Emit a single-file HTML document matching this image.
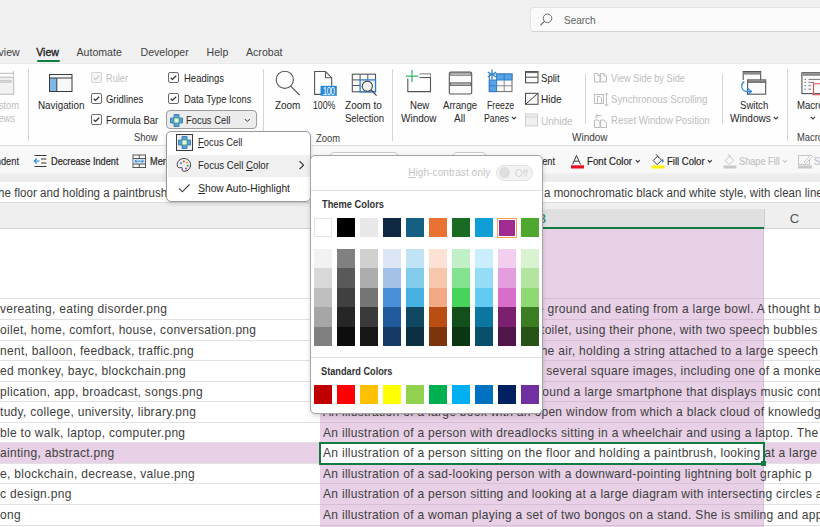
<!DOCTYPE html><html><head><meta charset="utf-8"><style>
html,body{margin:0;padding:0;width:820px;height:527px;overflow:hidden;background:#fff;position:relative}
body{font-family:"Liberation Sans",sans-serif}
.t{position:absolute;white-space:nowrap}
.r{position:absolute}
u{text-decoration-thickness:1px;text-underline-offset:1px}
</style></head><body>
<div class="r" style="left:0px;top:0px;width:820px;height:63px;background:#f0f0f0"></div>
<div class="r" style="left:0px;top:63px;width:820px;height:82px;background:#fefefe"></div>
<div class="r" style="left:0px;top:63px;width:820px;height:1px;background:#e9e9e9"></div>
<div class="r" style="left:0px;top:145px;width:820px;height:1px;background:#dedede"></div>
<div class="r" style="left:0px;top:146px;width:820px;height:1px;background:#ececec"></div>
<div class="r" style="left:0px;top:146px;width:820px;height:29px;background:#f8f8f8"></div>
<div class="r" style="left:0px;top:173px;width:820px;height:2px;background:#efefef"></div>
<div class="r" style="left:0px;top:175px;width:820px;height:6.5px;background:#ebebeb"></div>
<div class="r" style="left:0px;top:181.5px;width:820px;height:20.5px;background:#ffffff"></div>
<div class="r" style="left:0px;top:202px;width:820px;height:26px;background:#efefef"></div>
<div class="r" style="left:0px;top:201.6px;width:820px;height:1px;background:#dcdcdc"></div>
<div class="r" style="left:0px;top:228px;width:820px;height:299px;background:#ffffff"></div>
<div class="r" style="left:529.8px;top:6.7px;width:300px;height:25.8px;background:#fafafa;border:1px solid #e3e3e3;border-bottom-color:#d2d2d2;border-radius:4px;box-sizing:border-box"></div>
<svg class="r" style="left:538px;top:10px;" width="20" height="20" viewBox="0 0 20 20"><circle cx="9.5" cy="8.3" r="4.3" fill="none" stroke="#6b6b6b" stroke-width="1"/><line x1="6.4" y1="11.4" x2="2.8" y2="15" stroke="#6b6b6b" stroke-width="1.1" stroke-linecap="round"/></svg>
<div class="t " style="left:563.5px;top:15.67px;font-size:10.2px;line-height:10.2px;color:#616161;transform:scaleX(0.9804);transform-origin:0 0;">Search</div>
<div class="t " style="left:-1.5px;top:47.03px;font-size:10.6px;line-height:10.6px;color:#424242;">view</div>
<div class="t " style="left:36.2px;top:47.03px;font-size:10.6px;line-height:10.6px;color:#242424;-webkit-text-stroke:0.35px #242424;">View</div>
<div class="r" style="left:36.5px;top:60px;width:23px;height:2px;background:#107c41;border-radius:1px"></div>
<div class="t " style="left:76.5px;top:47.03px;font-size:10.6px;line-height:10.6px;color:#424242;">Automate</div>
<div class="t " style="left:140.5px;top:47.03px;font-size:10.6px;line-height:10.6px;color:#424242;">Developer</div>
<div class="t " style="left:206.5px;top:47.03px;font-size:10.6px;line-height:10.6px;color:#424242;">Help</div>
<div class="t " style="left:246px;top:47.03px;font-size:10.6px;line-height:10.6px;color:#424242;">Acrobat</div>
<div class="r" style="left:28px;top:69px;width:1px;height:72px;background:#d4d4d4"></div>
<div class="r" style="left:263px;top:69px;width:1px;height:72px;background:#d4d4d4"></div>
<div class="r" style="left:392px;top:69px;width:1px;height:72px;background:#d4d4d4"></div>
<div class="r" style="left:585px;top:74px;width:1px;height:50px;background:#d4d4d4"></div>
<div class="r" style="left:722px;top:74px;width:1px;height:50px;background:#d4d4d4"></div>
<div class="r" style="left:787px;top:69px;width:1px;height:72px;background:#d4d4d4"></div>
<svg class="r" style="left:0px;top:70px;" width="16" height="26" viewBox="0 0 16 26"><rect x="-6" y="7.2" width="19.7" height="17" fill="#f2f2f2" stroke="#b8b8b8" stroke-width="1"/><rect x="-4" y="10.2" width="15.5" height="2.2" fill="#d4d4d4" stroke="#c0c0c0" stroke-width="0.6"/><line x1="-2" y1="3.3" x2="13.5" y2="3.3" stroke="#b8b8b8"/><line x1="13.5" y1="1.3" x2="13.5" y2="5.5" stroke="#b8b8b8"/></svg>
<div class="t " style="left:19.2px;top:100.77px;font-size:10.2px;line-height:10.2px;color:#bdbdbd;transform:translateX(-100%) scaleX(0.9216);transform-origin:100% 0;">Custom</div>
<div class="t " style="left:15px;top:113.77px;font-size:10.2px;line-height:10.2px;color:#bdbdbd;transform:translateX(-100%) scaleX(0.9216);transform-origin:100% 0;">Views</div>
<svg class="r" style="left:48px;top:73px;" width="26" height="20" viewBox="0 0 26 20"><rect x="1.5" y="1.5" width="22.5" height="17" fill="#f7f7f7" stroke="#3b3b3b"/><rect x="2" y="5" width="6.8" height="13" fill="#7ab8ea"/><line x1="8.8" y1="5" x2="8.8" y2="18" stroke="#3b3b3b"/><line x1="1.5" y1="5" x2="24" y2="5" stroke="#3b3b3b"/></svg>
<div class="t " style="left:37.5px;top:100.77px;font-size:10.2px;line-height:10.2px;color:#262626;transform:scaleX(0.9647);transform-origin:0 0;">Navigation</div>
<svg class="r" style="left:91px;top:71.5px;" width="11" height="11" viewBox="0 0 11 11"><rect x="0.5" y="0.5" width="10" height="10" rx="1.5" fill="#f4f4f4" stroke="#d3d3d3"/><path d="M2.7 5.7 L4.5 7.4 L8.2 3.7" fill="none" stroke="#cfcfcf" stroke-width="1.3"/></svg>
<div class="t " style="left:106.3px;top:73.57px;font-size:10.2px;line-height:10.2px;color:#bdbdbd;transform:scaleX(0.9020);transform-origin:0 0;">Ruler</div>
<svg class="r" style="left:91px;top:93px;" width="11" height="11" viewBox="0 0 11 11"><rect x="0.5" y="0.5" width="10" height="10" rx="1.5" fill="#fff" stroke="#6a6a6a"/><path d="M2.7 5.7 L4.5 7.4 L8.2 3.7" fill="none" stroke="#333" stroke-width="1.3"/></svg>
<div class="t " style="left:106.3px;top:94.87px;font-size:10.2px;line-height:10.2px;color:#262626;transform:scaleX(0.9265);transform-origin:0 0;">Gridlines</div>
<svg class="r" style="left:91px;top:114.2px;" width="11" height="11" viewBox="0 0 11 11"><rect x="0.5" y="0.5" width="10" height="10" rx="1.5" fill="#fff" stroke="#6a6a6a"/><path d="M2.7 5.7 L4.5 7.4 L8.2 3.7" fill="none" stroke="#333" stroke-width="1.3"/></svg>
<div class="t " style="left:106.3px;top:116.17px;font-size:10.2px;line-height:10.2px;color:#262626;transform:scaleX(0.9314);transform-origin:0 0;">Formula Bar</div>
<svg class="r" style="left:168.3px;top:71.7px;" width="11" height="11" viewBox="0 0 11 11"><rect x="0.5" y="0.5" width="10" height="10" rx="1.5" fill="#fff" stroke="#6a6a6a"/><path d="M2.7 5.7 L4.5 7.4 L8.2 3.7" fill="none" stroke="#333" stroke-width="1.3"/></svg>
<div class="t " style="left:183.8px;top:73.57px;font-size:10.2px;line-height:10.2px;color:#262626;transform:scaleX(0.9314);transform-origin:0 0;">Headings</div>
<svg class="r" style="left:168.3px;top:92.8px;" width="11" height="11" viewBox="0 0 11 11"><rect x="0.5" y="0.5" width="10" height="10" rx="1.5" fill="#fff" stroke="#6a6a6a"/><path d="M2.7 5.7 L4.5 7.4 L8.2 3.7" fill="none" stroke="#333" stroke-width="1.3"/></svg>
<div class="t " style="left:183.8px;top:94.87px;font-size:10.2px;line-height:10.2px;color:#262626;transform:scaleX(0.9167);transform-origin:0 0;">Data Type Icons</div>
<div class="r" style="left:166px;top:110.3px;width:91px;height:19px;background:#ececec;border:1px solid #9c9c9c;border-radius:4px;box-sizing:border-box"></div>
<svg class="r" style="left:169.5px;top:113.8px;" width="13" height="13" viewBox="0 0 13 13"><path d="M4 0.5 H9 V4 H12.5 V9 H9 V12.5 H4 V9 H0.5 V4 H4 Z" fill="#5a9fdc" stroke="#2a6fb5" stroke-width="0.8"/><rect x="4" y="4" width="5" height="5" fill="#e8f5e8" stroke="#3aa35a" stroke-width="0.8"/></svg>
<div class="t " style="left:185.5px;top:116.17px;font-size:10.2px;line-height:10.2px;color:#262626;transform:scaleX(0.9216);transform-origin:0 0;">Focus Cell</div>
<svg class="r" style="left:244px;top:117.5px;" width="7" height="5" viewBox="0 0 7 5"><path d="M0.8 1 L3.3 3.5 L5.8 1" fill="none" stroke="#3a3a3a" stroke-width="1"/></svg>
<div class="t " style="left:134.4px;top:133.27px;font-size:10.2px;line-height:10.2px;color:#3a3a3a;transform:scaleX(0.9216);transform-origin:0 0;">Show</div>
<svg class="r" style="left:274px;top:68px;" width="28" height="30" viewBox="0 0 28 30"><circle cx="10.8" cy="11.8" r="8.6" fill="none" stroke="#505050" stroke-width="1.1"/><line x1="16.9" y1="18.4" x2="25.7" y2="27.2" stroke="#505050" stroke-width="1.2"/></svg>
<div class="t " style="left:274.5px;top:100.67px;font-size:10.2px;line-height:10.2px;color:#262626;transform:scaleX(0.9755);transform-origin:0 0;">Zoom</div>
<svg class="r" style="left:313px;top:70px;" width="26" height="28" viewBox="0 0 26 28"><path d="M1.6 1.5 H12.5 L18.7 7.7 V24.4 H1.6 Z" fill="#fff" stroke="#555" stroke-width="1.1"/><path d="M12.5 1.5 V7.7 H18.7" fill="none" stroke="#555" stroke-width="1.1"/><rect x="7.5" y="15.8" width="16.3" height="10" fill="#2b88d8"/><text x="15.65" y="24.9" font-family="Liberation Sans" font-size="10.2" fill="#fff" text-anchor="middle" letter-spacing="-0.6" transform="translate(15.65 0) scale(0.78 1) translate(-15.65 0)">100</text></svg>
<div class="t " style="left:312.9px;top:100.67px;font-size:10.2px;line-height:10.2px;color:#262626;transform:scaleX(0.8578);transform-origin:0 0;">100%</div>
<svg class="r" style="left:350px;top:72px;" width="30" height="26" viewBox="0 0 30 26"><rect x="2.3" y="2.2" width="23.2" height="17.6" fill="#fafafa" stroke="#555" stroke-width="1.1"/><line x1="2.3" y1="7.9" x2="10.1" y2="7.9" stroke="#555"/><line x1="2.3" y1="13.5" x2="10.1" y2="13.5" stroke="#555"/><line x1="10.1" y1="2.2" x2="10.1" y2="7.9" stroke="#555"/><line x1="17.8" y1="2.2" x2="17.8" y2="7.9" stroke="#555"/><rect x="10.1" y="7.9" width="15.4" height="11.9" fill="#fafafa" stroke="#2b7cd3" stroke-width="1.3"/><circle cx="17.3" cy="14.2" r="5.1" fill="#f4f4f4" stroke="#444" stroke-width="1.1"/><line x1="20.9" y1="17.9" x2="26.6" y2="23.7" stroke="#444" stroke-width="1.2"/></svg>
<div class="t " style="left:345px;top:100.67px;font-size:10.2px;line-height:10.2px;color:#262626;transform:scaleX(0.9853);transform-origin:0 0;">Zoom to</div>
<div class="t " style="left:344.5px;top:114.07px;font-size:10.2px;line-height:10.2px;color:#262626;transform:scaleX(0.9314);transform-origin:0 0;">Selection</div>
<div class="t " style="left:316.3px;top:133.67px;font-size:10.2px;line-height:10.2px;color:#3a3a3a;transform:scaleX(0.9216);transform-origin:0 0;">Zoom</div>
<svg class="r" style="left:404px;top:68px;" width="30" height="26" viewBox="0 0 30 26"><path d="M3.8 10.4 V23.6 H26.5 V6 H15.5" fill="none" stroke="#555" stroke-width="1.1"/><line x1="15.5" y1="9.5" x2="26.5" y2="9.5" stroke="#555" stroke-width="1.1"/><rect x="15.5" y="6.5" width="11" height="2.5" fill="#fafafa"/><line x1="8" y1="2" x2="8" y2="14" stroke="#3db36b" stroke-width="1.3"/><line x1="1.9" y1="8.2" x2="14.3" y2="8.2" stroke="#3db36b" stroke-width="1.3"/></svg>
<div class="t " style="left:409.7px;top:100.67px;font-size:10.2px;line-height:10.2px;color:#262626;transform:scaleX(0.9412);transform-origin:0 0;">New</div>
<div class="t " style="left:401.4px;top:113.77px;font-size:10.2px;line-height:10.2px;color:#262626;transform:scaleX(0.9804);transform-origin:0 0;">Window</div>
<svg class="r" style="left:447px;top:70px;" width="27" height="26" viewBox="0 0 27 26"><rect x="2.3" y="2.1" width="22.4" height="21.9" rx="1.5" fill="#fafafa" stroke="#555" stroke-width="1.1"/><rect x="2.6" y="2.4" width="21.8" height="3.4" fill="#7a7a7a"/><rect x="3.6" y="3.4" width="19.8" height="1.4" fill="#c8c8c8"/><rect x="2.6" y="12.4" width="21.8" height="3.4" fill="#555"/><rect x="3.6" y="13.4" width="19.8" height="1.4" fill="#c8c8c8"/></svg>
<div class="t " style="left:442.6px;top:100.67px;font-size:10.2px;line-height:10.2px;color:#262626;transform:scaleX(0.9412);transform-origin:0 0;">Arrange</div>
<div class="t " style="left:453.8px;top:113.77px;font-size:10.2px;line-height:10.2px;color:#262626;transform:scaleX(0.9853);transform-origin:0 0;">All</div>
<svg class="r" style="left:486px;top:68px;" width="28" height="26" viewBox="0 0 28 26"><rect x="3.3" y="6" width="22.7" height="17.6" fill="#fafafa" stroke="#6b6b6b" stroke-width="1"/><rect x="10.6" y="6" width="15.4" height="6" fill="#5aa3e3" stroke="#2b7cd3" stroke-width="1"/><rect x="3.3" y="12" width="7.3" height="11.6" fill="#5aa3e3" stroke="#2b7cd3" stroke-width="1"/><line x1="3.3" y1="17.8" x2="10.6" y2="17.8" stroke="#2b7cd3"/><line x1="18.2" y1="6" x2="18.2" y2="12" stroke="#2b7cd3"/><line x1="10.6" y1="17.8" x2="26" y2="17.8" stroke="#8a8a8a"/><line x1="18.2" y1="12" x2="18.2" y2="23.6" stroke="#8a8a8a"/><rect x="0.5" y="1" width="9.5" height="10" fill="#fafafa" opacity="0"/><g stroke="#2b88d8" stroke-width="1.3"><line x1="6" y1="1.6" x2="6" y2="11.4"/><line x1="1.8" y1="4" x2="10.2" y2="9"/><line x1="1.8" y1="9" x2="10.2" y2="4"/></g></svg>
<div class="t " style="left:487.3px;top:100.67px;font-size:10.2px;line-height:10.2px;color:#262626;transform:scaleX(0.8578);transform-origin:0 0;">Freeze</div>
<div class="t " style="left:483.5px;top:113.77px;font-size:10.2px;line-height:10.2px;color:#262626;transform:scaleX(0.8627);transform-origin:0 0;">Panes</div>
<svg class="r" style="left:511px;top:116px;" width="6" height="5" viewBox="0 0 6 5"><path d="M0.8 0.9 L2.9 3 L5 0.9" fill="none" stroke="#3a3a3a" stroke-width="1.1"/></svg>
<svg class="r" style="left:524px;top:70px;" width="15" height="15" viewBox="0 0 15 15"><rect x="1.5" y="1.5" width="12.5" height="11.3" fill="#fafafa" stroke="#444"/><rect x="1.5" y="1.5" width="12.5" height="1.6" fill="#6a6a6a"/><line x1="1.5" y1="7.2" x2="14" y2="7.2" stroke="#444"/></svg>
<div class="t " style="left:541.3px;top:73.77px;font-size:10.2px;line-height:10.2px;color:#262626;transform:scaleX(0.9412);transform-origin:0 0;">Split</div>
<svg class="r" style="left:524px;top:92px;" width="15" height="14" viewBox="0 0 15 14"><rect x="1.5" y="1.3" width="12.5" height="11" fill="#fafafa" stroke="#444"/><line x1="1.5" y1="12.3" x2="14" y2="1.3" stroke="#444"/></svg>
<div class="t " style="left:541.3px;top:95.17px;font-size:10.2px;line-height:10.2px;color:#262626;transform:scaleX(0.9853);transform-origin:0 0;">Hide</div>
<svg class="r" style="left:524px;top:113px;" width="15" height="14" viewBox="0 0 15 14"><rect x="1.5" y="1" width="12" height="12" fill="#f0f0f0" stroke="#cfcfcf"/><line x1="1.5" y1="4" x2="13.5" y2="4" stroke="#cfcfcf"/></svg>
<div class="t " style="left:541.3px;top:116.57px;font-size:10.2px;line-height:10.2px;color:#bdbdbd;transform:scaleX(0.9784);transform-origin:0 0;">Unhide</div>
<svg class="r" style="left:593px;top:71px;" width="16" height="13" viewBox="0 0 16 13"><g fill="#fafafa" stroke="#bdbdbd" stroke-width="1"><path d="M1.5 2.5 H5 L7 4.5 V11 H1.5 Z"/><path d="M7.5 2.5 H11 L13.5 5 V11 H7.5 Z"/><path d="M5 2.5 V4.5 H7 M11 2.5 V5 H13.5"/></g></svg>
<div class="t " style="left:610.7px;top:73.87px;font-size:10.2px;line-height:10.2px;color:#bdbdbd;transform:scaleX(0.9020);transform-origin:0 0;">View Side by Side</div>
<svg class="r" style="left:593px;top:91px;" width="17" height="17" viewBox="0 0 17 17"><g fill="#fafafa" stroke="#bdbdbd" stroke-width="1"><rect x="1.5" y="3.5" width="9" height="9"/><path d="M4.5 5.5 H7 L8.5 7 V12.5 H4.5 Z"/><line x1="13.5" y1="2" x2="13.5" y2="15"/><path d="M11.8 3.8 L13.5 2 L15.2 3.8 M11.8 13.2 L13.5 15 L15.2 13.2" fill="none"/></g></svg>
<div class="t " style="left:610.7px;top:95.27px;font-size:10.2px;line-height:10.2px;color:#bdbdbd;transform:scaleX(0.9510);transform-origin:0 0;">Synchronous Scrolling</div>
<svg class="r" style="left:593px;top:112px;" width="17" height="17" viewBox="0 0 17 17"><g fill="#fafafa" stroke="#bdbdbd" stroke-width="1"><path d="M1.5 8 H5 L7 10 V15.5 H1.5 Z"/><path d="M7.5 8 H11 L13.5 10.5 V15.5 H7.5 Z"/><path d="M3 6.5 V3.5 H8.5" fill="none"/><path d="M4.8 1.8 L3 3.5 L4.8 5.2" fill="none"/></g></svg>
<div class="t " style="left:610.7px;top:116.27px;font-size:10.2px;line-height:10.2px;color:#bdbdbd;transform:scaleX(0.9412);transform-origin:0 0;">Reset Window Position</div>
<div class="t " style="left:572.2px;top:133.27px;font-size:10.2px;line-height:10.2px;color:#3a3a3a;transform:scaleX(0.9804);transform-origin:0 0;">Window</div>
<svg class="r" style="left:738px;top:68px;" width="32" height="30" viewBox="0 0 32 30"><path d="M5.2 12 V3.5 H22.7 V11.9" fill="#fafafa" stroke="#555" stroke-width="1.1"/><rect x="5.6" y="4" width="16.6" height="2.6" fill="#8a8a8a"/><rect x="9.6" y="11.9" width="18.1" height="14.3" fill="#fafafa" stroke="#555" stroke-width="1.1"/><rect x="10.1" y="12.4" width="17.1" height="2.6" fill="#7a7a7a"/><path d="M6.3 13.6 C2.8 15.5 2.6 21.6 7.5 23.4 L13.4 23.4" fill="none" stroke="#2b88d8" stroke-width="1.2"/><path d="M9.2 20 L13.4 23.4 L9.2 26.8" fill="none" stroke="#2b88d8" stroke-width="1.2"/></svg>
<div class="t " style="left:740.4px;top:101.07px;font-size:10.2px;line-height:10.2px;color:#262626;transform:scaleX(0.9412);transform-origin:0 0;">Switch</div>
<div class="t " style="left:729.8px;top:113.58px;font-size:10.3px;line-height:10.3px;color:#262626;transform:scaleX(0.9757);transform-origin:0 0;">Windows</div>
<svg class="r" style="left:772.5px;top:116px;" width="6" height="5" viewBox="0 0 6 5"><path d="M0.8 0.9 L2.9 3 L5 0.9" fill="none" stroke="#3a3a3a" stroke-width="1.1"/></svg>
<svg class="r" style="left:800px;top:70px;" width="20" height="27" viewBox="0 0 20 27"><rect x="1.9" y="2.7" width="24" height="20.9" fill="#fafafa" stroke="#555" stroke-width="1.1"/><rect x="2.4" y="3.2" width="23" height="2.6" fill="#8a8a8a"/><g stroke="#777" stroke-width="1"><line x1="4.5" y1="9.4" x2="6" y2="9.4"/><line x1="4.5" y1="12.4" x2="6" y2="12.4"/><line x1="4.5" y1="15.7" x2="6" y2="15.7"/><line x1="4.5" y1="19.2" x2="6" y2="19.2"/><line x1="8.5" y1="9.4" x2="20" y2="9.4"/><line x1="8.5" y1="12.4" x2="14" y2="12.4"/><line x1="8.5" y1="15.7" x2="11" y2="15.7"/><line x1="8.5" y1="19.2" x2="11" y2="19.2"/></g><path d="M13.5 24.5 V13.7 H22 M13.5 24.5 H12.5 M13.5 24.7 H22" fill="#fafafa" stroke="#e04848" stroke-width="1.1"/></svg>
<div class="t " style="left:796.6px;top:101.07px;font-size:10.2px;line-height:10.2px;color:#262626;transform:scaleX(0.9412);transform-origin:0 0;">Macros</div>
<svg class="r" style="left:809.5px;top:116px;" width="6" height="5" viewBox="0 0 6 5"><path d="M0.8 0.9 L2.9 3 L5 0.9" fill="none" stroke="#3a3a3a" stroke-width="1.1"/></svg>
<div class="t " style="left:797px;top:133.27px;font-size:10.2px;line-height:10.2px;color:#3a3a3a;transform:scaleX(0.9216);transform-origin:0 0;">Macros</div>
<div class="t " style="left:18.7px;top:156.97px;font-size:10.2px;line-height:10.2px;color:#262626;transform:translateX(-100%) scaleX(0.9118);transform-origin:100% 0;-webkit-text-stroke:0.1px #262626;">Increase Indent</div>
<svg class="r" style="left:33px;top:154px;" width="15" height="14" viewBox="0 0 15 14"><line x1="1.5" y1="1.5" x2="13.5" y2="1.5" stroke="#3b3b3b"/><line x1="1.5" y1="12.5" x2="13.5" y2="12.5" stroke="#3b3b3b"/><line x1="8" y1="5" x2="13.5" y2="5" stroke="#3b3b3b"/><line x1="8" y1="9" x2="13.5" y2="9" stroke="#3b3b3b"/><line x1="1.5" y1="7" x2="6.5" y2="7" stroke="#2b88d8" stroke-width="1.1"/><path d="M3.8 4.5 L1.3 7 L3.8 9.5" fill="none" stroke="#2b88d8" stroke-width="1.1"/></svg>
<div class="t " style="left:50.5px;top:156.97px;font-size:10.2px;line-height:10.2px;color:#262626;transform:scaleX(0.9020);transform-origin:0 0;-webkit-text-stroke:0.2px #262626;">Decrease Indent</div>
<svg class="r" style="left:132px;top:154px;" width="15" height="15" viewBox="0 0 15 15"><rect x="1" y="1" width="12.5" height="12.5" fill="#fafafa" stroke="#555"/><rect x="1.5" y="4.5" width="11.5" height="5.5" fill="#d6e8f8"/><line x1="1" y1="4.5" x2="13.5" y2="4.5" stroke="#555"/><line x1="1" y1="10" x2="13.5" y2="10" stroke="#555"/><line x1="7.25" y1="1" x2="7.25" y2="4.5" stroke="#555"/><line x1="7.25" y1="10" x2="7.25" y2="13.5" stroke="#555"/><line x1="3" y1="7.2" x2="11.5" y2="7.2" stroke="#2b88d8"/><path d="M4.5 5.7 L3 7.2 L4.5 8.7 M10 5.7 L11.5 7.2 L10 8.7" fill="none" stroke="#2b88d8"/></svg>
<div class="t " style="left:149.7px;top:156.97px;font-size:10.2px;line-height:10.2px;color:#262626;transform:scaleX(0.9020);transform-origin:0 0;-webkit-text-stroke:0.2px #262626;">Merge &amp; Center</div>
<div class="r" style="left:328.5px;top:152px;width:70px;height:20px;border:1px solid #c9c9c9;border-radius:5px;background:#fdfdfd;box-sizing:border-box"></div>
<div class="r" style="left:451.5px;top:152px;width:35px;height:20px;border:1px solid #c9c9c9;border-radius:5px;background:#fdfdfd;box-sizing:border-box"></div>
<div class="t " style="left:555.2px;top:156.97px;font-size:10.2px;line-height:10.2px;color:#262626;transform:translateX(-100%) scaleX(0.9020);transform-origin:100% 0;-webkit-text-stroke:0.1px #262626;">Indent</div>
<svg class="r" style="left:570px;top:154px;" width="16" height="16" viewBox="0 0 16 16"><path d="M2.5 10.5 L6.5 1.5 L10.5 10.5 M4 7.2 H9" fill="none" stroke="#3b3b3b" stroke-width="1"/><rect x="1" y="11.3" width="13" height="3.2" fill="#e81123"/></svg>
<div class="t " style="left:586.8px;top:156.97px;font-size:10.2px;line-height:10.2px;color:#262626;transform:scaleX(0.9480);transform-origin:0 0;-webkit-text-stroke:0.2px #262626;">Font Color</div>
<svg class="r" style="left:634.5px;top:158.5px;" width="6" height="5" viewBox="0 0 6 5"><path d="M0.8 1.2 L2.8 3.2 L4.8 1.2" fill="none" stroke="#3a3a3a" stroke-width="1.1"/></svg>
<svg class="r" style="left:650px;top:153px;" width="16" height="17" viewBox="0 0 16 17"><path d="M3.2 7.6 L7.6 3.2 L11.6 7.2 L7.2 11.6 Z" fill="#fafafa" stroke="#3b3b3b" stroke-width="1"/><line x1="6" y1="1.2" x2="9" y2="4.8" stroke="#3b3b3b" stroke-width="1"/><path d="M12.6 5.6 Q14.4 7.8 13.4 9 Q12 9.8 11.6 8.2 Z" fill="#2b88d8"/><rect x="1.5" y="12.5" width="13" height="3" fill="#fff100"/></svg>
<div class="t " style="left:666.8px;top:156.97px;font-size:10.2px;line-height:10.2px;color:#262626;transform:scaleX(0.9343);transform-origin:0 0;-webkit-text-stroke:0.2px #262626;">Fill Color</div>
<svg class="r" style="left:706.5px;top:158.5px;" width="6" height="5" viewBox="0 0 6 5"><path d="M0.8 1.2 L2.8 3.2 L4.8 1.2" fill="none" stroke="#3a3a3a" stroke-width="1.1"/></svg>
<svg class="r" style="left:722px;top:153px;" width="16" height="17" viewBox="0 0 16 17"><path d="M3.2 7.6 L7.6 3.2 L11.6 7.2 L7.2 11.6 Z" fill="#fafafa" stroke="#c4c4c4" stroke-width="1"/><line x1="6" y1="1.2" x2="9" y2="4.8" stroke="#c4c4c4" stroke-width="1"/><rect x="1.5" y="12.5" width="13" height="3" fill="#c8c8c8"/></svg>
<div class="t " style="left:739px;top:156.97px;font-size:10.2px;line-height:10.2px;color:#c4c4c4;transform:scaleX(0.9020);transform-origin:0 0;-webkit-text-stroke:0.2px #c4c4c4;">Shape Fill</div>
<svg class="r" style="left:782px;top:158.5px;" width="6" height="5" viewBox="0 0 6 5"><path d="M0.8 1.2 L2.8 3.2 L4.8 1.2" fill="none" stroke="#c8c8c8" stroke-width="1.1"/></svg>
<svg class="r" style="left:797px;top:153px;" width="18" height="17" viewBox="0 0 18 17"><rect x="1.5" y="2.5" width="11" height="9" fill="none" stroke="#c8c8c8"/><path d="M7 9 L14 2 L15.5 3.5 L8.5 10.5 Z" fill="#fafafa" stroke="#c8c8c8"/><rect x="1" y="12.5" width="14" height="3" fill="#c8c8c8"/></svg>
<div class="t " style="left:813.7px;top:156.97px;font-size:10.2px;line-height:10.2px;color:#c4c4c4;transform:scaleX(0.9020);transform-origin:0 0;-webkit-text-stroke:0.2px #c4c4c4;">Shape Outline</div>
<div class="t " style="left:-2.5px;top:186.52px;font-size:12.5px;line-height:12.5px;color:#3b3b3b;transform:scaleX(0.9200);transform-origin:0 0;letter-spacing:0.054px;">he floor and holding a paintbrush, looking at a large canvas with abstract shapes in</div>
<div class="t " style="left:543.5px;top:186.52px;font-size:12.5px;line-height:12.5px;color:#3b3b3b;transform:scaleX(0.9200);transform-origin:0 0;letter-spacing:0.054px;">a monochromatic black and white style, with clean lines</div>
<div class="r" style="left:320px;top:209px;width:444px;height:19px;background:#e0e0e0"></div>
<div class="r" style="left:763.5px;top:209px;width:1px;height:19px;background:#cfcfcf"></div>
<div class="t " style="left:789.8px;top:212.20px;font-size:13px;line-height:13px;color:#505050;">C</div>
<div class="t " style="left:537.5px;top:212.20px;font-size:13px;line-height:13px;color:#107c41;">B</div>
<div class="r" style="left:0px;top:228px;width:820px;height:1px;background:#d4d4d4"></div>
<div class="r" style="left:320px;top:227px;width:444px;height:2px;background:#107c41"></div>
<div class="r" style="left:320px;top:229px;width:444px;height:298px;background:#e8d0e6"></div>
<div class="r" style="left:763px;top:229px;width:1px;height:298px;background:#d6bed4"></div>
<div class="r" style="left:0px;top:298px;width:320px;height:1px;background:#e1e1e1"></div>
<div class="r" style="left:320px;top:298px;width:444px;height:1px;background:#d7c0d5"></div>
<div class="r" style="left:764px;top:298px;width:56px;height:1px;background:#e1e1e1"></div>
<div class="r" style="left:0px;top:319px;width:320px;height:1px;background:#e1e1e1"></div>
<div class="r" style="left:320px;top:319px;width:444px;height:1px;background:#d7c0d5"></div>
<div class="r" style="left:764px;top:319px;width:56px;height:1px;background:#e1e1e1"></div>
<div class="r" style="left:0px;top:340px;width:320px;height:1px;background:#e1e1e1"></div>
<div class="r" style="left:320px;top:340px;width:444px;height:1px;background:#d7c0d5"></div>
<div class="r" style="left:764px;top:340px;width:56px;height:1px;background:#e1e1e1"></div>
<div class="r" style="left:0px;top:360px;width:320px;height:1px;background:#e1e1e1"></div>
<div class="r" style="left:320px;top:360px;width:444px;height:1px;background:#d7c0d5"></div>
<div class="r" style="left:764px;top:360px;width:56px;height:1px;background:#e1e1e1"></div>
<div class="r" style="left:0px;top:381px;width:320px;height:1px;background:#e1e1e1"></div>
<div class="r" style="left:320px;top:381px;width:444px;height:1px;background:#d7c0d5"></div>
<div class="r" style="left:764px;top:381px;width:56px;height:1px;background:#e1e1e1"></div>
<div class="r" style="left:0px;top:401px;width:320px;height:1px;background:#e1e1e1"></div>
<div class="r" style="left:320px;top:401px;width:444px;height:1px;background:#d7c0d5"></div>
<div class="r" style="left:764px;top:401px;width:56px;height:1px;background:#e1e1e1"></div>
<div class="r" style="left:0px;top:422px;width:320px;height:1px;background:#e1e1e1"></div>
<div class="r" style="left:320px;top:422px;width:444px;height:1px;background:#d7c0d5"></div>
<div class="r" style="left:764px;top:422px;width:56px;height:1px;background:#e1e1e1"></div>
<div class="r" style="left:0px;top:442px;width:320px;height:1px;background:#e1e1e1"></div>
<div class="r" style="left:320px;top:442px;width:444px;height:1px;background:#d7c0d5"></div>
<div class="r" style="left:764px;top:442px;width:56px;height:1px;background:#e1e1e1"></div>
<div class="r" style="left:0px;top:463px;width:320px;height:1px;background:#e1e1e1"></div>
<div class="r" style="left:320px;top:463px;width:444px;height:1px;background:#d7c0d5"></div>
<div class="r" style="left:764px;top:463px;width:56px;height:1px;background:#e1e1e1"></div>
<div class="r" style="left:0px;top:483px;width:320px;height:1px;background:#e1e1e1"></div>
<div class="r" style="left:320px;top:483px;width:444px;height:1px;background:#d7c0d5"></div>
<div class="r" style="left:764px;top:483px;width:56px;height:1px;background:#e1e1e1"></div>
<div class="r" style="left:0px;top:504px;width:320px;height:1px;background:#e1e1e1"></div>
<div class="r" style="left:320px;top:504px;width:444px;height:1px;background:#d7c0d5"></div>
<div class="r" style="left:764px;top:504px;width:56px;height:1px;background:#e1e1e1"></div>
<div class="r" style="left:0px;top:525px;width:320px;height:1px;background:#e1e1e1"></div>
<div class="r" style="left:320px;top:525px;width:444px;height:1px;background:#d7c0d5"></div>
<div class="r" style="left:764px;top:525px;width:56px;height:1px;background:#e1e1e1"></div>
<div class="r" style="left:0px;top:443px;width:320px;height:20px;background:#e8d0e6"></div>
<div class="r" style="left:764px;top:443px;width:56px;height:20px;background:#e8d0e6"></div>
<div class="t " style="left:-0.5px;top:302.40px;font-size:13px;line-height:13px;color:#404040;transform:scaleX(0.9231);transform-origin:0 0;letter-spacing:0.325px;">vereating, eating disorder.png</div>
<div class="t " style="left:-0.5px;top:322.95px;font-size:13px;line-height:13px;color:#404040;transform:scaleX(0.9231);transform-origin:0 0;letter-spacing:0.325px;">oilet, home, comfort, house, conversation.png</div>
<div class="t " style="left:-0.5px;top:343.50px;font-size:13px;line-height:13px;color:#404040;transform:scaleX(0.9231);transform-origin:0 0;letter-spacing:0.325px;">nent, balloon, feedback, traffic.png</div>
<div class="t " style="left:-0.5px;top:364.05px;font-size:13px;line-height:13px;color:#404040;transform:scaleX(0.9231);transform-origin:0 0;letter-spacing:0.325px;">ed monkey, bayc, blockchain.png</div>
<div class="t " style="left:-0.5px;top:384.60px;font-size:13px;line-height:13px;color:#404040;transform:scaleX(0.9231);transform-origin:0 0;letter-spacing:0.325px;">plication, app, broadcast, songs.png</div>
<div class="t " style="left:-0.5px;top:405.15px;font-size:13px;line-height:13px;color:#404040;transform:scaleX(0.9231);transform-origin:0 0;letter-spacing:0.325px;">tudy, college, university, library.png</div>
<div class="t " style="left:-0.5px;top:425.70px;font-size:13px;line-height:13px;color:#404040;transform:scaleX(0.9231);transform-origin:0 0;letter-spacing:0.325px;">ble to walk, laptop, computer.png</div>
<div class="t " style="left:-0.5px;top:446.25px;font-size:13px;line-height:13px;color:#404040;transform:scaleX(0.9231);transform-origin:0 0;letter-spacing:0.325px;">ainting, abstract.png</div>
<div class="t " style="left:-0.5px;top:466.80px;font-size:13px;line-height:13px;color:#404040;transform:scaleX(0.9231);transform-origin:0 0;letter-spacing:0.325px;">e, blockchain, decrease, value.png</div>
<div class="t " style="left:-0.5px;top:487.35px;font-size:13px;line-height:13px;color:#404040;transform:scaleX(0.9231);transform-origin:0 0;letter-spacing:0.325px;">c design.png</div>
<div class="t " style="left:-0.5px;top:507.90px;font-size:13px;line-height:13px;color:#404040;transform:scaleX(0.9231);transform-origin:0 0;letter-spacing:0.325px;">ong</div>
<div class="t " style="left:530.2px;top:302.40px;font-size:13px;line-height:13px;color:#404040;transform:scaleX(0.9231);transform-origin:0 0;letter-spacing:0.325px;">he ground and eating from a large bowl. A thought bubble</div>
<div class="t " style="left:540.5px;top:322.95px;font-size:13px;line-height:13px;color:#404040;transform:scaleX(0.9231);transform-origin:0 0;letter-spacing:0.325px;">toilet, using their phone, with two speech bubbles</div>
<div class="t " style="left:537px;top:343.50px;font-size:13px;line-height:13px;color:#404040;transform:scaleX(0.9231);transform-origin:0 0;letter-spacing:0.325px;">the air, holding a string attached to a large speech bubble</div>
<div class="t " style="left:538.6px;top:364.05px;font-size:13px;line-height:13px;color:#404040;transform:scaleX(0.9231);transform-origin:0 0;letter-spacing:0.325px;">f several square images, including one of a monkey</div>
<div class="t " style="left:530.5px;top:384.60px;font-size:13px;line-height:13px;color:#404040;transform:scaleX(0.9231);transform-origin:0 0;letter-spacing:0.325px;">around a large smartphone that displays music content</div>
<div class="t " style="left:323px;top:405.15px;font-size:13px;line-height:13px;color:#404040;transform:scaleX(0.9231);transform-origin:0 0;letter-spacing:0.325px;">An illustration of a large book with an open window from which a black cloud of knowledge</div>
<div class="t " style="left:323px;top:425.70px;font-size:13px;line-height:13px;color:#404040;transform:scaleX(0.9231);transform-origin:0 0;letter-spacing:0.325px;">An illustration of a person with dreadlocks sitting in a wheelchair and using a laptop. The</div>
<div class="t " style="left:323px;top:446.25px;font-size:13px;line-height:13px;color:#404040;transform:scaleX(0.9231);transform-origin:0 0;letter-spacing:0.325px;">An illustration of a person sitting on the floor and holding a paintbrush, looking at a large</div>
<div class="t " style="left:323px;top:466.80px;font-size:13px;line-height:13px;color:#404040;transform:scaleX(0.9231);transform-origin:0 0;letter-spacing:0.325px;">An illustration of a sad-looking person with a downward-pointing lightning bolt graphic p</div>
<div class="t " style="left:323px;top:487.35px;font-size:13px;line-height:13px;color:#404040;transform:scaleX(0.9231);transform-origin:0 0;letter-spacing:0.325px;">An illustration of a person sitting and looking at a large diagram with intersecting circles a</div>
<div class="t " style="left:323px;top:507.90px;font-size:13px;line-height:13px;color:#404040;transform:scaleX(0.9231);transform-origin:0 0;letter-spacing:0.325px;">An illustration of a woman playing a set of two bongos on a stand. She is smiling and app</div>
<div class="r" style="left:320px;top:442px;width:444px;height:22.5px;background:#fff"></div>
<div class="t " style="left:323px;top:446.25px;font-size:13px;line-height:13px;color:#404040;transform:scaleX(0.9231);transform-origin:0 0;letter-spacing:0.325px;">An illustration of a person sitting on the floor and holding a paintbrush, looking</div>
<div class="r" style="left:319px;top:441.5px;width:446px;height:23px;border:2px solid #107c41;box-sizing:border-box"></div>
<div class="r" style="left:761px;top:461px;width:5px;height:5px;background:#107c41"></div>
<div class="r" style="left:166px;top:130.5px;width:145px;height:71.5px;background:#fff;border:1px solid #9a9a9a;border-radius:5px;box-sizing:border-box;box-shadow:0 2px 4px rgba(0,0,0,0.14)"></div>
<div class="r" style="left:167.5px;top:155px;width:142px;height:22px;background:#f0f0f0"></div>
<svg class="r" style="left:175.5px;top:133.5px;" width="17" height="17" viewBox="0 0 17 17"><rect x="0.5" y="0.5" width="16" height="16" fill="#efefef" stroke="#3b3b3b"/><path d="M6 2.5 H11 V6 H14.5 V11 H11 V14.5 H6 V11 H2.5 V6 H6 Z" fill="#5a9fdc" stroke="#2a6fb5" stroke-width="0.8"/><rect x="6" y="6" width="5" height="5" fill="#e8f5e8" stroke="#3aa35a" stroke-width="0.8"/></svg>
<div class="t " style="left:198.2px;top:138.47px;font-size:10.2px;line-height:10.2px;color:#262626;transform:scaleX(0.9216);transform-origin:0 0;"><u>F</u>ocus Cell</div>
<svg class="r" style="left:176px;top:157px;" width="16" height="16" viewBox="0 0 16 16"><path d="M8 1.5 C4 1.5 1.2 4.3 1.2 7.8 C1.2 10.3 3 11.2 4.3 10.6 C5.6 10 6.4 10.6 6.2 12 C6 13.6 7 14.5 8.6 14.3 C12.2 13.9 14.6 11 14.6 7.8 C14.6 4.2 11.7 1.5 8 1.5 Z" fill="none" stroke="#3b3b3b" stroke-width="1"/><circle cx="5" cy="6.2" r="1" fill="#2b88d8"/><circle cx="7.8" cy="4.4" r="1" fill="#e04040"/><circle cx="11" cy="5.5" r="1" fill="#f0a020"/><circle cx="11.8" cy="8.8" r="1" fill="#2ea05a"/><circle cx="10" cy="11.6" r="1" fill="#a040c0"/></svg>
<div class="t " style="left:198.2px;top:161.27px;font-size:10.2px;line-height:10.2px;color:#262626;transform:scaleX(0.9412);transform-origin:0 0;">Focus Cell <u>C</u>olor</div>
<svg class="r" style="left:297.5px;top:159.5px;" width="8" height="11" viewBox="0 0 8 11"><path d="M1.5 1.2 L5.5 5.2 L1.5 9.2" fill="none" stroke="#333" stroke-width="1.2"/></svg>
<svg class="r" style="left:178px;top:183px;" width="13" height="11" viewBox="0 0 13 11"><path d="M1 5.3 L4.3 8.8 L11.5 1.5" fill="none" stroke="#3b3b3b" stroke-width="1.1"/></svg>
<div class="t " style="left:198.2px;top:184.47px;font-size:10.2px;line-height:10.2px;color:#262626;"><u>S</u>how Auto-Highlight</div>
<div class="r" style="left:310px;top:155px;width:233px;height:258.5px;background:#fff;border:1px solid #a4a4a4;border-radius:5px;box-sizing:border-box;box-shadow:0 2px 5px rgba(0,0,0,0.16)"></div>
<div class="t " style="left:408.2px;top:168.47px;font-size:10.2px;line-height:10.2px;color:#c4c4c4;"><u>H</u>igh-contrast only</div>
<div class="r" style="left:496.2px;top:164.5px;width:36.5px;height:16px;background:#f3f3f3;border:1px solid #e2e2e2;border-radius:8px;box-sizing:border-box"></div>
<div class="r" style="left:498.8px;top:167.2px;width:11px;height:11px;background:#dedede;border-radius:50%"></div>
<div class="t " style="left:514.8px;top:168.87px;font-size:10.2px;line-height:10.2px;color:#d6d6d6;transform:scaleX(0.9804);transform-origin:0 0;">Off</div>
<div class="r" style="left:311px;top:189.5px;width:231px;height:1px;background:#e0e0e0"></div>
<div class="t " style="left:321.5px;top:200.17px;font-size:10.2px;line-height:10.2px;color:#333;transform:scaleX(0.9118);transform-origin:0 0;font-weight:700;">Theme Colors</div>
<div class="r" style="left:313.5px;top:218.3px;width:18.5px;height:18.5px;background:#ffffff;border:1px solid #e3e3e3;box-sizing:border-box"></div>
<div class="r" style="left:336.52px;top:218.3px;width:18.5px;height:18.5px;background:#000000"></div>
<div class="r" style="left:359.54px;top:218.3px;width:18.5px;height:18.5px;background:#e8e8e8"></div>
<div class="r" style="left:382.56px;top:218.3px;width:18.5px;height:18.5px;background:#0e2841"></div>
<div class="r" style="left:405.58px;top:218.3px;width:18.5px;height:18.5px;background:#156082"></div>
<div class="r" style="left:428.6px;top:218.3px;width:18.5px;height:18.5px;background:#e97132"></div>
<div class="r" style="left:451.62px;top:218.3px;width:18.5px;height:18.5px;background:#196b24"></div>
<div class="r" style="left:474.64px;top:218.3px;width:18.5px;height:18.5px;background:#0f9ed5"></div>
<div class="r" style="left:497.15999999999997px;top:217.7px;width:20px;height:20px;border:1.5px solid #f0a050;box-sizing:border-box;background:#fff"></div>
<div class="r" style="left:499.15999999999997px;top:219.7px;width:16px;height:16px;background:#a02b93"></div>
<div class="r" style="left:520.6800000000001px;top:218.3px;width:18.5px;height:18.5px;background:#4ea72e"></div>
<div class="r" style="left:313.5px;top:248.6px;width:18.5px;height:19.6px;background:#f2f2f2"></div>
<div class="r" style="left:313.5px;top:268.15px;width:18.5px;height:19.6px;background:#d9d9d9"></div>
<div class="r" style="left:313.5px;top:287.7px;width:18.5px;height:19.6px;background:#bfbfbf"></div>
<div class="r" style="left:313.5px;top:307.25px;width:18.5px;height:19.6px;background:#a6a6a6"></div>
<div class="r" style="left:313.5px;top:326.8px;width:18.5px;height:19.6px;background:#808080"></div>
<div class="r" style="left:336.52px;top:248.6px;width:18.5px;height:19.6px;background:#808080"></div>
<div class="r" style="left:336.52px;top:268.15px;width:18.5px;height:19.6px;background:#595959"></div>
<div class="r" style="left:336.52px;top:287.7px;width:18.5px;height:19.6px;background:#404040"></div>
<div class="r" style="left:336.52px;top:307.25px;width:18.5px;height:19.6px;background:#262626"></div>
<div class="r" style="left:336.52px;top:326.8px;width:18.5px;height:19.6px;background:#0d0d0d"></div>
<div class="r" style="left:359.54px;top:248.6px;width:18.5px;height:19.6px;background:#d0d0d0"></div>
<div class="r" style="left:359.54px;top:268.15px;width:18.5px;height:19.6px;background:#adadad"></div>
<div class="r" style="left:359.54px;top:287.7px;width:18.5px;height:19.6px;background:#757575"></div>
<div class="r" style="left:359.54px;top:307.25px;width:18.5px;height:19.6px;background:#3a3a3a"></div>
<div class="r" style="left:359.54px;top:326.8px;width:18.5px;height:19.6px;background:#171717"></div>
<div class="r" style="left:382.56px;top:248.6px;width:18.5px;height:19.6px;background:#dce6f4"></div>
<div class="r" style="left:382.56px;top:268.15px;width:18.5px;height:19.6px;background:#a4c2e8"></div>
<div class="r" style="left:382.56px;top:287.7px;width:18.5px;height:19.6px;background:#4a90d9"></div>
<div class="r" style="left:382.56px;top:307.25px;width:18.5px;height:19.6px;background:#215a9a"></div>
<div class="r" style="left:382.56px;top:326.8px;width:18.5px;height:19.6px;background:#153a63"></div>
<div class="r" style="left:405.58px;top:248.6px;width:18.5px;height:19.6px;background:#c0e4f5"></div>
<div class="r" style="left:405.58px;top:268.15px;width:18.5px;height:19.6px;background:#83cbeb"></div>
<div class="r" style="left:405.58px;top:287.7px;width:18.5px;height:19.6px;background:#46b1e1"></div>
<div class="r" style="left:405.58px;top:307.25px;width:18.5px;height:19.6px;background:#104862"></div>
<div class="r" style="left:405.58px;top:326.8px;width:18.5px;height:19.6px;background:#0a3041"></div>
<div class="r" style="left:428.6px;top:248.6px;width:18.5px;height:19.6px;background:#fbe2d5"></div>
<div class="r" style="left:428.6px;top:268.15px;width:18.5px;height:19.6px;background:#f7c7ac"></div>
<div class="r" style="left:428.6px;top:287.7px;width:18.5px;height:19.6px;background:#f2aa84"></div>
<div class="r" style="left:428.6px;top:307.25px;width:18.5px;height:19.6px;background:#ba4e12"></div>
<div class="r" style="left:428.6px;top:326.8px;width:18.5px;height:19.6px;background:#7c340c"></div>
<div class="r" style="left:451.62px;top:248.6px;width:18.5px;height:19.6px;background:#c1f0c8"></div>
<div class="r" style="left:451.62px;top:268.15px;width:18.5px;height:19.6px;background:#84e291"></div>
<div class="r" style="left:451.62px;top:287.7px;width:18.5px;height:19.6px;background:#47d45a"></div>
<div class="r" style="left:451.62px;top:307.25px;width:18.5px;height:19.6px;background:#124f1a"></div>
<div class="r" style="left:451.62px;top:326.8px;width:18.5px;height:19.6px;background:#0c3511"></div>
<div class="r" style="left:474.64px;top:248.6px;width:18.5px;height:19.6px;background:#caeefb"></div>
<div class="r" style="left:474.64px;top:268.15px;width:18.5px;height:19.6px;background:#95dcf7"></div>
<div class="r" style="left:474.64px;top:287.7px;width:18.5px;height:19.6px;background:#61cbf3"></div>
<div class="r" style="left:474.64px;top:307.25px;width:18.5px;height:19.6px;background:#0b769f"></div>
<div class="r" style="left:474.64px;top:326.8px;width:18.5px;height:19.6px;background:#074f6a"></div>
<div class="r" style="left:497.65999999999997px;top:248.6px;width:18.5px;height:19.6px;background:#f2ceef"></div>
<div class="r" style="left:497.65999999999997px;top:268.15px;width:18.5px;height:19.6px;background:#e49edd"></div>
<div class="r" style="left:497.65999999999997px;top:287.7px;width:18.5px;height:19.6px;background:#d86dcb"></div>
<div class="r" style="left:497.65999999999997px;top:307.25px;width:18.5px;height:19.6px;background:#7a206e"></div>
<div class="r" style="left:497.65999999999997px;top:326.8px;width:18.5px;height:19.6px;background:#501549"></div>
<div class="r" style="left:520.6800000000001px;top:248.6px;width:18.5px;height:19.6px;background:#d9f2d0"></div>
<div class="r" style="left:520.6800000000001px;top:268.15px;width:18.5px;height:19.6px;background:#b3e5a1"></div>
<div class="r" style="left:520.6800000000001px;top:287.7px;width:18.5px;height:19.6px;background:#8ed973"></div>
<div class="r" style="left:520.6800000000001px;top:307.25px;width:18.5px;height:19.6px;background:#3a7d22"></div>
<div class="r" style="left:520.6800000000001px;top:326.8px;width:18.5px;height:19.6px;background:#275317"></div>
<div class="r" style="left:311px;top:357px;width:231px;height:1px;background:#e0e0e0"></div>
<div class="t " style="left:321.2px;top:367.17px;font-size:10.2px;line-height:10.2px;color:#333;transform:scaleX(0.9020);transform-origin:0 0;font-weight:700;">Standard Colors</div>
<div class="r" style="left:313.5px;top:385.4px;width:18.5px;height:18.5px;background:#c00000"></div>
<div class="r" style="left:336.52px;top:385.4px;width:18.5px;height:18.5px;background:#ff0000"></div>
<div class="r" style="left:359.54px;top:385.4px;width:18.5px;height:18.5px;background:#ffc000"></div>
<div class="r" style="left:382.56px;top:385.4px;width:18.5px;height:18.5px;background:#ffff00"></div>
<div class="r" style="left:405.58px;top:385.4px;width:18.5px;height:18.5px;background:#92d050"></div>
<div class="r" style="left:428.6px;top:385.4px;width:18.5px;height:18.5px;background:#00b050"></div>
<div class="r" style="left:451.62px;top:385.4px;width:18.5px;height:18.5px;background:#00b0f0"></div>
<div class="r" style="left:474.64px;top:385.4px;width:18.5px;height:18.5px;background:#0070c0"></div>
<div class="r" style="left:497.65999999999997px;top:385.4px;width:18.5px;height:18.5px;background:#002060"></div>
<div class="r" style="left:520.6800000000001px;top:385.4px;width:18.5px;height:18.5px;background:#7030a0"></div>
</body></html>
